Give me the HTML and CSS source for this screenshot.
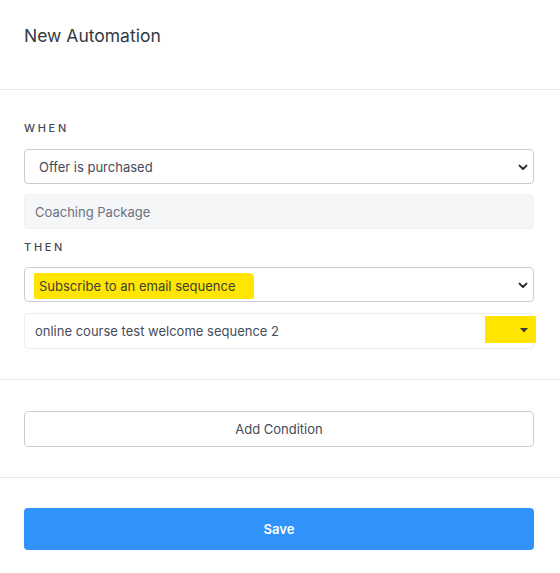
FILE: index.html
```html
<!DOCTYPE html>
<html>
<head>
<meta charset="utf-8">
<link rel="stylesheet" href="styles.css">
</head>
<body>
<div class="modal">
  <div class="header">
    <h1 class="title">New Automation</h1>
  </div>
  <div class="section">
    <div class="label">When</div>
    <div class="select">
      <span class="value">Offer is purchased</span>
      <svg class="chev" width="10" height="7" viewBox="0 0 10 7"><path d="M1.5 1.6 L5 5 L8.5 1.6" fill="none" stroke="#2b2f36" stroke-width="2" stroke-linecap="round" stroke-linejoin="round"/></svg>
    </div>
    <div class="readonly">Coaching Package</div>
    <div class="label then">Then</div>
    <div class="select">
      <span class="value hl">Subscribe to an email sequence</span>
      <svg class="chev" width="10" height="7" viewBox="0 0 10 7"><path d="M1.5 1.6 L5 5 L8.5 1.6" fill="none" stroke="#2b2f36" stroke-width="2" stroke-linecap="round" stroke-linejoin="round"/></svg>
    </div>
    <div class="combo">
      <span class="combo-value">online course test welcome sequence 2</span>
      <span class="caret-hl"><svg width="8" height="5" viewBox="0 0 8 5"><path d="M0 0 L8 0 L4 4.5 Z" fill="#3a3a2a"/></svg></span>
    </div>
  </div>
  <div class="section mid">
    <button class="btn-outline">Add Condition</button>
  </div>
  <div class="section foot">
    <button class="btn-primary">Save</button>
  </div>
</div>
</body>
</html>
```
FILE: styles.css
```css
* { box-sizing: border-box; }
body {
  margin: 0;
  background: #fff;
  font-family: Inter, "Noto Sans", sans-serif;
  color: #454c57;
}
.header {
  height: 90px;
  padding: 24px 24px 0;
  border-bottom: 1px solid #e6e8eb;
}
.title {
  margin: 0;
  font-size: 17.5px;
  line-height: 24px;
  font-weight: 400;
  color: #333a44;
}
.section {
  padding: 30px 26px 30px 24px;
  border-bottom: 1px solid #e6e8eb;
}
.label {
  font-size: 11px;
  line-height: 16px;
  font-weight: 500;
  letter-spacing: 2.7px;
  text-transform: uppercase;
  color: #444b55;
  margin-bottom: 13px;
}
.label.then { margin-top: 10px; margin-bottom: 12px; }
.select {
  position: relative;
  height: 35px;
  border: 1px solid #c9ced6;
  border-radius: 4px;
  display: flex;
  align-items: center;
  padding-left: 14px;
  font-size: 13px;
}
.value { color: #454c57; }
.value.hl {
  background: #ffe500;
  color: #3d4232;
  margin-left: -5px;
  padding: 5px 18px 5px 5px;
  margin-top: 2px;
  border-radius: 2px 5px 2px 2px;
}
.chev {
  position: absolute;
  right: 5px;
  top: 14px;
}
.readonly {
  margin-top: 10px;
  height: 35px;
  background: #f5f6f8;
  border-radius: 4px;
  border: 1px solid #eff1f3;
  display: flex;
  align-items: center;
  padding-left: 10px;
  font-size: 13px;
  color: #6b7280;
}
.combo {
  position: relative;
  margin-top: 11px;
  height: 36px;
  border: 1px solid #eceef1;
  border-radius: 4px;
  display: flex;
  align-items: center;
  padding-left: 10px;
  font-size: 13px;
  color: #454c57;
}
.caret-hl {
  position: absolute;
  right: -3px;
  top: 2px;
  width: 51px;
  height: 27px;
  background: #ffe500;
  display: flex;
  align-items: center;
  justify-content: flex-end;
  padding-right: 8px;
  padding-top: 2px;
}
.caret-hl svg { display: block; }
.mid { padding-top: 31px; }
.btn-outline {
  display: block;
  width: 100%;
  height: 36px;
  border: 1px solid #c9ced6;
  border-radius: 4px;
  background: #fff;
  font-family: Inter, "Noto Sans", sans-serif;
  font-size: 13px;
  color: #454c57;
}
.foot { border-bottom: none; padding-top: 30px; }
.btn-primary {
  display: block;
  width: 100%;
  height: 42px;
  border: none;
  border-radius: 4px;
  background: #3092fb;
  color: #fff;
  font-family: Inter, "Noto Sans", sans-serif;
  font-weight: 600;
  font-size: 13px;
}
```
